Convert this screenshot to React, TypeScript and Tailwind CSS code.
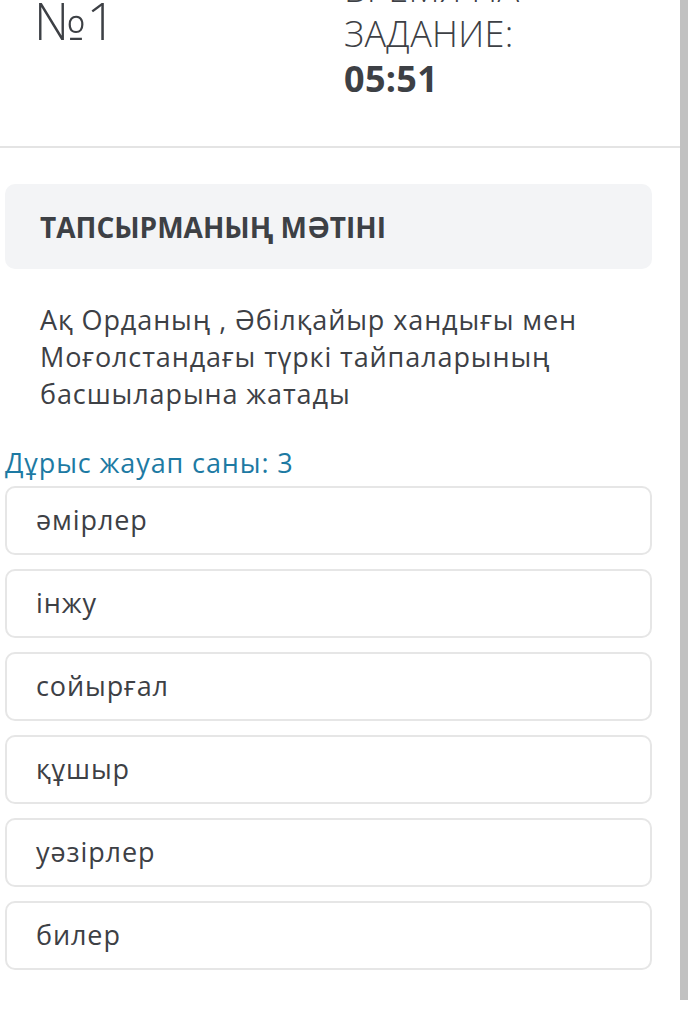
const options = ["әмірлер", "інжу", "сойырғал", "құшыр", "уәзірлер", "билер"];

export default function App() {
  return (
    <div
      className="flex h-[1024px] w-full overflow-hidden bg-white text-[#3d4045]"
      style={{ fontFamily: '"Open Sans", "Noto Sans", sans-serif' }}
    >
      <main className="flex w-[680px] flex-col">
        <header className="flex h-[148px] border-b-2 border-[#e4e4e4]">
          <div className="ml-[34px] mt-[-6px] w-[310px] text-[52px] font-light leading-none">№1</div>
          <div className="mt-[-34px] text-[36px] font-light leading-[45px] tracking-[0.3px]">
            <div>ВРЕМЯ НА</div>
            <div>ЗАДАНИЕ:</div>
            <div className="font-bold">05:51</div>
          </div>
        </header>

        <section className="flex flex-col pl-[5px] pr-[28px] pt-[36px]">
          <div className="flex h-[85px] items-center rounded-[10px] bg-[#f3f4f6] px-[35px]">
            <h2 className="text-[28px] font-bold">ТАПСЫРМАНЫҢ МӘТІНІ</h2>
          </div>

          <p className="mt-[32px] px-[35px] text-[27px] leading-[37px] tracking-[0.9px]">
            Ақ Орданың , Әбілқайыр хандығы мен Моғолстандағы түркі тайпаларының басшыларына жатады
          </p>

          <div className="mb-[6px] mt-[34px] text-[27px] leading-[34px] tracking-[0.9px] text-[#1d7aa3]">
            Дұрыс жауап саны: 3
          </div>

          <ul className="flex flex-col gap-[14px]">
            {options.map((o) => (
              <li
                key={o}
                className="flex h-[69px] items-center rounded-[10px] border-2 border-[#e6e6e6] px-[29px] text-[27px] tracking-[0.9px]"
              >
                {o}
              </li>
            ))}
          </ul>
        </section>
      </main>
      <div className="h-[1000px] w-[8px] bg-[#c1c1c1]" />
    </div>
  );
}
